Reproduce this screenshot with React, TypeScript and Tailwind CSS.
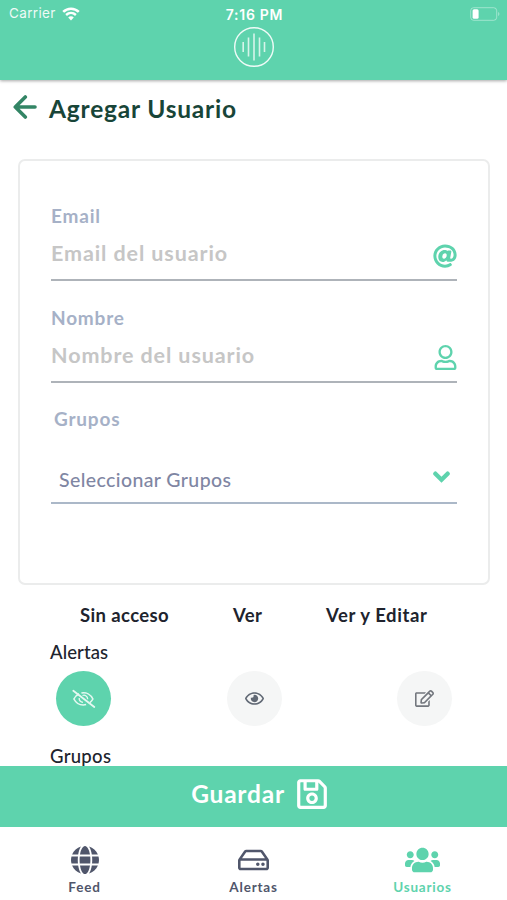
import React from 'react';
import { FaAt, FaGlobe, FaRegEdit, FaRegEye, FaRegHdd, FaRegSave, FaRegUser, FaUsers } from 'react-icons/fa';

interface FieldProps {
  label: string;
  placeholder: string;
  icon: React.ReactNode;
}

function StatusBar() {
  return (
    <div className="grid grid-cols-3 items-center h-[27px] pl-[9px] pr-[7px] font-['Inter'] text-[13px] text-white">
      <div className="flex items-center gap-[7px]">
        <span className="tracking-[0.35px] opacity-90 text-[13.5px]">Carrier</span>
        <svg className="-ml-px" width="18" height="14" viewBox="0 0 18 14" fill="none">
          <path d="M1.2 4.9C5.6.6 12.4.6 16.8 4.9" stroke="white" strokeWidth="2.6" />
          <path d="M4.1 8C7 5.3 11 5.3 13.9 8" stroke="white" strokeWidth="2.4" />
          <path d="M9 13.4 6.2 10.4C7.8 9 10.2 9 11.8 10.4Z" fill="white" />
        </svg>
      </div>
      <span className="justify-self-center pt-px font-semibold text-[14px] tracking-[0.7px] whitespace-nowrap">7:16 PM</span>
      <svg className="justify-self-end" width="30" height="14" viewBox="0 0 30 14" fill="none">
        <rect x=".7" y=".7" width="26" height="12.6" rx="3" stroke="white" strokeOpacity=".4" />
        <rect x="2.6" y="2.3" width="6" height="9.4" rx="1.5" fill="white" />
        <path d="M28.2 5v4c1.6-.7 1.6-3.3 0-4Z" fill="white" fillOpacity=".45" />
      </svg>
    </div>
  );
}

function Header() {
  return (
    <header className="relative h-20 shrink-0 bg-[#5ed3ad] shadow-[0_1px_3px_rgba(0,0,0,0.35)]">
      <StatusBar />
      <svg className="mx-auto" width="41" height="41" viewBox="0 0 41 41" fill="none" stroke="white">
        <circle cx="21" cy="20" r="19.3" strokeWidth="1.4" strokeOpacity=".9" />
        <path
          d="M10.2 15v10M15.5 10.5v19M21 6.5v27M26.5 10.5v19M31.5 15v10"
          strokeWidth="1.6"
          strokeOpacity=".75"
        />
      </svg>
    </header>
  );
}

function Field({ label, placeholder, icon }: FieldProps) {
  return (
    <div className="h-[101.5px]">
      <label className="block text-[19px] leading-6 font-bold tracking-[0.8px] text-[#a6b1c7]">
        {label}
      </label>
      <div className="flex items-center h-[53px] border-b-2 border-[#aeb3b9]">
        <input
          type="text"
          placeholder={placeholder}
          className="flex-1 min-w-0 bg-transparent text-[21.5px] font-bold tracking-[0.9px] placeholder:text-[#c6c6c6] placeholder:opacity-100 outline-none"
        />
        {icon}
      </div>
    </div>
  );
}

export default function App() {
  return (
    <div className="flex flex-col h-[900px] w-full overflow-hidden bg-white font-['Lato',sans-serif]">
      <Header />

      <main className="flex-1 min-h-0 overflow-hidden">
        {/* Page title */}
        <div className="flex items-center h-[58px] pl-[13px]">
          <svg className="-mt-[5px]" width="24" height="24" viewBox="0 0 24 24" fill="none">
            <path
              d="M22 12H2.5M12.3 2 2.3 12l10 10"
              stroke="#338565"
              strokeWidth="3.6"
              strokeLinecap="round"
              strokeLinejoin="round"
            />
          </svg>
          <h1 className="ml-3 text-[24.5px] font-bold tracking-[0.8px] text-[#184538]">Agregar Usuario</h1>
        </div>

        {/* User data */}
        <div className="mt-[21px] ml-[18px] mr-[17px] h-[426px] rounded-[7px] border-[2.5px] border-[#ebecec] pt-[43px] pl-[31px] pr-[31px]">
          <Field
            label="Email"
            placeholder="Email del usuario"
            icon={<FaAt size={24} className="mt-1 text-[#5ed3ad]" />}
          />
          <Field
            label="Nombre"
            placeholder="Nombre del usuario"
            icon={<FaRegUser size={25} className="mt-1 -mr-px text-[#5ed3ad]" />}
          />
          <label className="block pl-[3px] text-[19px] leading-6 font-bold tracking-[0.8px] text-[#a6b1c7]">
            Grupos
          </label>
          <button
            type="button"
            className="flex items-center justify-between w-full h-[73px] pt-[26px] pl-2 pr-[7px] border-b-2 border-[#abb8c8] text-[19.5px] font-medium tracking-[0.4px] text-[#7f86a3]"
          >
            Seleccionar Grupos
            <svg className="-mt-1.5" width="17" height="12" viewBox="0 0 17 12" fill="none">
              <path d="m2.4 2.7 6.1 6 6.1-6" stroke="#5ed3ad" strokeWidth="4.4" strokeLinecap="round" />
            </svg>
          </button>
        </div>

        {/* Permissions */}
        <div className="flex mt-[18px] pl-20 text-[18.5px] leading-6 font-bold tracking-[0.38px] text-[#20232d]">
          <span className="w-[153px]">Sin acceso</span>
          <span className="w-[93px]">Ver</span>
          <span className="tracking-[0.6px]">Ver y Editar</span>
        </div>
        <h2 className="mt-[13px] pl-[50px] text-[18.5px] leading-6 font-medium tracking-[0.1px] text-[#20232d]">Alertas</h2>
        <div className="flex justify-between mt-[7px] pl-14 pr-[55px]">
          <button type="button" className="flex items-center justify-center size-[55px] rounded-full bg-[#5ed3ad]">
            <svg width="24" height="20" viewBox="0 0 24 20" fill="none" stroke="#e6f8f1">
              <path d="M7 4.8C4.4 6.2 2.6 8.5 1.9 10c1.9 3.7 5.5 6 9.3 6 1.1 0 2-.1 2.9-.4M9.4 4c4.6-1 9.2 1.3 11.5 6-.7 1.4-1.7 2.6-3 3.6" strokeWidth="1.6" />
              <path d="M7.2 9c-.3 2.4 1.4 4.2 3.8 4.4M10.5 6.5c2.7-1 5.2.9 5.2 3.7" strokeWidth="1.3" />
              <path d="m1.3 1.8 21 16.2" strokeWidth="1.8" strokeLinecap="round" />
            </svg>
          </button>
          <button type="button" className="flex items-center justify-center size-[55px] rounded-full bg-[#f5f6f6]">
            <FaRegEye size={19} className="text-[#616975]" />
          </button>
          <button type="button" className="flex items-center justify-center size-[55px] rounded-full bg-[#f5f6f6]">
            <FaRegEdit size={19} className="text-[#73777e]" />
          </button>
        </div>
        <h2 className="mt-[18px] pl-[50px] text-[18.5px] leading-6 font-medium tracking-[0.3px] text-[#20232d]">Grupos</h2>
      </main>

      <button
        type="button"
        className="flex shrink-0 items-center justify-center h-[61px] pb-[5px] pl-[13px] gap-2.5 bg-[#5ed3ad] text-[24.5px] font-bold tracking-[0.8px] text-white"
      >
        Guardar
        <FaRegSave size={34} />
      </button>

      {/* Tabs */}
      <nav className="grid grid-cols-3 shrink-0 h-[73px] pt-4 text-[13.5px] font-bold tracking-[0.8px] text-[#50566b]">
        <a className="flex flex-col items-center">
          <FaGlobe size={28} className="h-[34px]" />
          <span>Feed</span>
        </a>
        <a className="flex flex-col items-center">
          <FaRegHdd size={31} className="h-[34px]" />
          <span>Alertas</span>
        </a>
        <a className="flex flex-col items-center text-[#5ed3ad]">
          <FaUsers size={35} className="h-[34px]" />
          <span>Usuarios</span>
        </a>
      </nav>
    </div>
  );
}
